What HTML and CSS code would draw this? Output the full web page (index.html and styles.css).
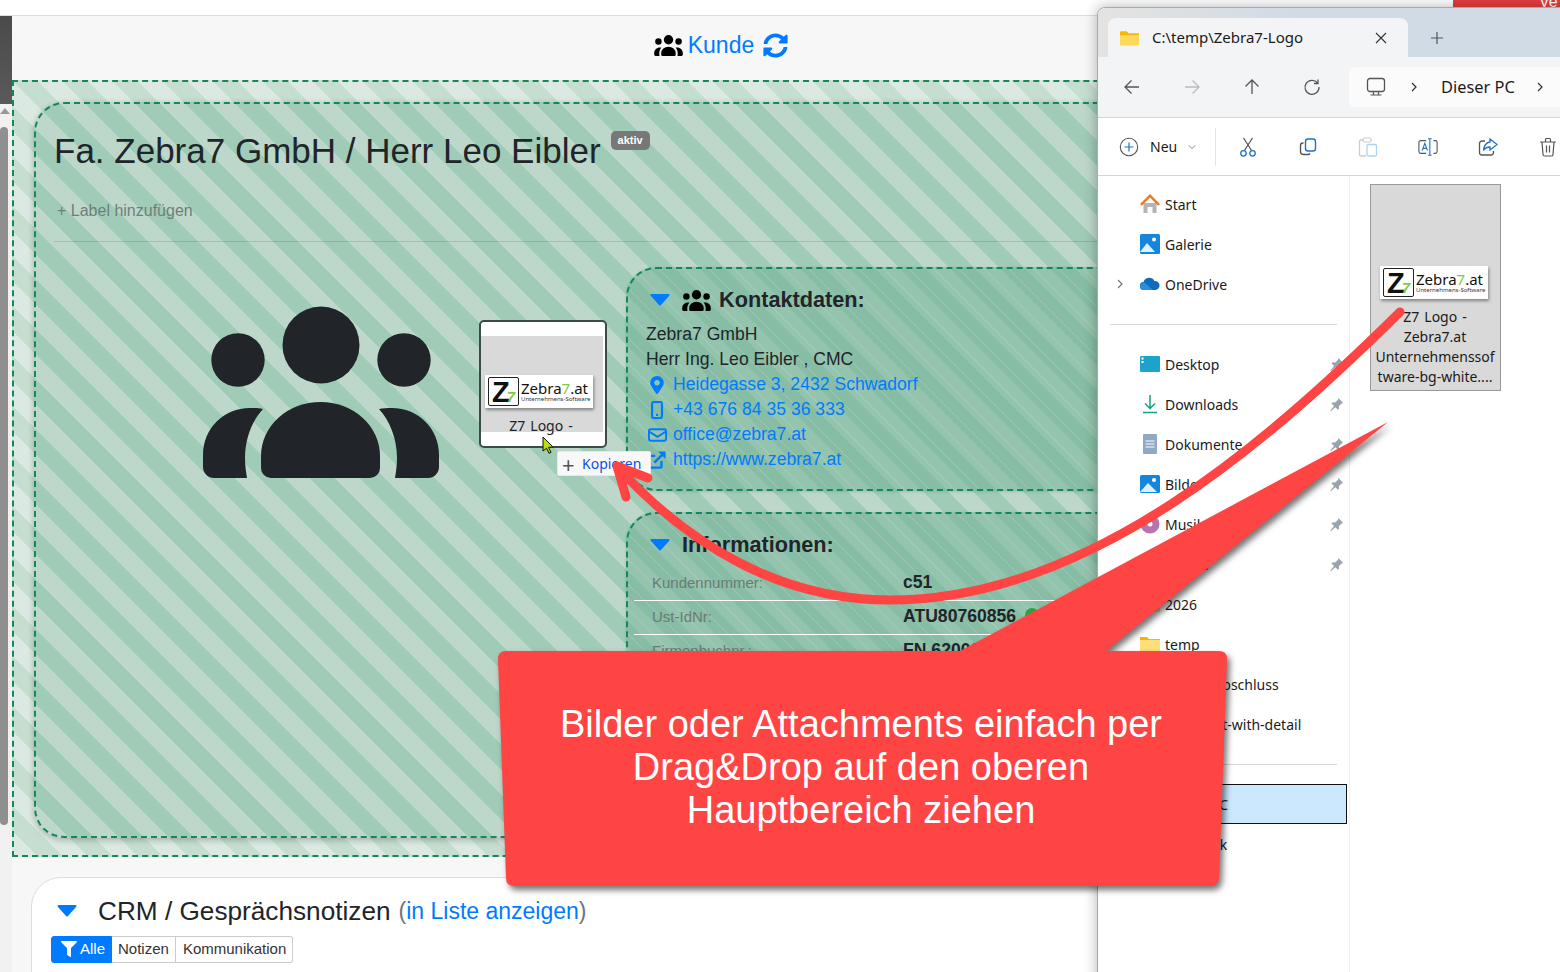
FILE: index.html
```html
<!DOCTYPE html>
<html lang="de">
<head>
    <meta charset="UTF-8">
    <title>Kunde - Fa. Zebra7 GmbH</title>
    <link rel="stylesheet" href="styles.css">
</head>
<body>

<svg class="sprite" aria-hidden="true">
    <symbol id="users" viewBox="0 0 238 173">
        <circle cx="119" cy="39" r="38.5"/>
        <circle cx="36" cy="54" r="26.7"/>
        <circle cx="202" cy="54" r="26.7"/>
        <path d="M69 172a10 10 0 0 1-10-10v-12A59.5 54 0 0 1 178 150v12a10 10 0 0 1-10 10z"/>
        <path id="users-side" d="M12 172A11 11 0 0 1 1 161v-12C1 122 22 102 48 102c5 0 9 0 13 1C50 115 43 133 43 152c0 7 1 14 2 20z"/>
        <use href="#users-side" transform="matrix(-1 0 0 1 238 0)"/>
    </symbol>
    <symbol id="caret" viewBox="0 0 20 12">
        <path d="M1.5 1h17L10 10.500z" stroke="currentColor" stroke-width="2" stroke-linejoin="round"/>
    </symbol>
    <symbol id="pin" viewBox="0 0 16 16">
        <path d="M10 1l5 5-1.500.800-3 3 .3 2.700-1.200 1.200-2.700-2.700L2 15l-.6-.6 4-4.900L2.700 6.800 3.900 5.600l2.700.3 3-3z"/>
    </symbol>
    <symbol id="chev" viewBox="0 0 10 10">
        <path d="M3 1l4 4-4 4" fill="none" stroke="currentColor" stroke-width="1.200"/>
    </symbol>
    <symbol id="folder" viewBox="0 0 20 16">
        <path d="M0 1h7l2 2h11v3H0z" fill="#f5b800"/>
        <path d="M0 4h20v12H0z" fill="#ffdf7a"/>
    </symbol>
</svg>

<div class="page">
    <div class="topbar"></div>

    <div class="app">
        <div class="strip">
            <div class="strip-dark"></div>
            <div class="strip-arrow"></div>
            <div class="strip-thumb"></div>
        </div>

        <main class="main">
            <div class="head">
                <svg class="head-users"><use href="#users"/></svg>
                <a class="head-link">Kunde</a>
                <svg class="head-sync" viewBox="0 0 512 512"><path d="M370.72 133.28C339.458 104.008 298.888 87.962 255.848 88c-77.458.068-144.328 53.178-162.791 126.85-1.344 5.363-6.122 9.15-11.651 9.15H24.103c-7.498 0-13.194-6.807-11.807-14.176C33.933 94.924 134.813 8 256 8c66.448 0 126.791 26.136 171.315 68.685L463.03 40.97C478.149 25.851 504 36.559 504 57.941V192c0 13.255-10.745 24-24 24H345.941c-21.382 0-32.09-25.851-16.971-40.971l41.75-41.749zM32 296h134.059c21.382 0 32.09 25.851 16.971 40.971l-41.75 41.75c31.262 29.273 71.835 45.319 114.876 45.28 77.418-.07 144.315-53.144 162.787-126.849 1.344-5.363 6.122-9.15 11.651-9.15h57.304c7.498 0 13.194 6.807 11.807 14.176C478.067 417.076 377.187 504 256 504c-66.448 0-126.791-26.136-171.315-68.685L48.97 471.03C33.851 486.149 8 475.441 8 454.059V320c0-13.255 10.745-24 24-24z"/></svg>
            </div>

            <section class="dropzone">
                <div class="customer">
                    <div class="title-row">
                        <h1 class="title">Fa. Zebra7 GmbH / Herr Leo Eibler</h1>
                        <span class="badge">aktiv</span>
                    </div>
                    <div class="add-label">+ Label hinzufügen</div>

                    <div class="columns">
                        <div class="avatar-col">
                            <svg class="avatar"><use href="#users"/></svg>
                        </div>
                        <div class="cards-col">
                            <div class="info-card contact-card">
                                <h3 class="card-head">
                                    <svg class="caret"><use href="#caret"/></svg>
                                    <svg class="card-users"><use href="#users"/></svg>
                                    Kontaktdaten:
                                </h3>
                                <div class="line">Zebra7 GmbH</div>
                                <div class="line">Herr Ing. Leo Eibler , CMC</div>
                                <a class="line link">
                                    <svg class="line-icon" viewBox="0 0 384 512"><path d="M172.268 501.670C26.970 291.031 0 260.211 0 192 0 85.961 85.961 0 192 0s192 85.961 192 192c0 68.211-26.970 99.031-172.268 309.670-9.535 13.774-29.930 13.773-39.464 0zM192 272c44.183 0 80-35.817 80-80s-35.817-80-80-80-80 35.817-80 80 35.817 80 80 80z"/></svg>
                                    Heidegasse 3, 2432 Schwadorf
                                </a>
                                <a class="line link">
                                    <svg class="line-icon" viewBox="0 0 16 20"><rect x="2.500" y="1" width="11" height="18" rx="2" fill="none" stroke="currentColor" stroke-width="2.400"/><circle cx="8" cy="15.500" r="1.300"/></svg>
                                    +43 676 84 35 36 333
                                </a>
                                <a class="line link">
                                    <svg class="line-icon line-icon-wide" viewBox="0 0 20 14"><rect x="1" y="1" width="18" height="12" rx="2" fill="none" stroke="currentColor" stroke-width="2"/><path d="M1.500 3.500l8.500 5.500 8.500-5.500" fill="none" stroke="currentColor" stroke-width="2"/></svg>
                                    office@zebra7.at
                                </a>
                                <a class="line link">
                                    <svg class="line-icon" viewBox="0 0 20 20"><path d="M15 11v6a1.500 1.500 0 0 1-1.500 1.500H3A1.500 1.500 0 0 1 1.500 17V7A1.500 1.500 0 0 1 3 5.500h5" fill="none" stroke="currentColor" stroke-width="2.600"/><path d="M7 13L16 4" fill="none" stroke="currentColor" stroke-width="2.800"/><path d="M11 .5h8.500V9z"/></svg>
                                    https://www.zebra7.at
                                </a>
                            </div>

                            <div class="info-card facts-card">
                                <h3 class="card-head">
                                    <svg class="caret"><use href="#caret"/></svg>
                                    <span class="facts-title">Informationen:</span>
                                </h3>
                                <div class="fact"><span class="fact-key">Kundennummer:</span><b>c51</b></div>
                                <div class="fact"><span class="fact-key">Ust-IdNr:</span><b>ATU80760856 <i class="ok"></i></b></div>
                                <div class="fact"><span class="fact-key">Firmenbuchnr.:</span><b>FN 620000</b></div>
                            </div>
                        </div>
                    </div>
                </div>
            </section>

            <section class="crm">
                <h2 class="crm-title">
                    <svg class="crm-caret"><use href="#caret"/></svg>
                    CRM / Gesprächsnotizen <small class="crm-sub">(<a>in Liste anzeigen</a>)</small>
                </h2>
                <div class="filters">
                    <button class="filter filter-active">
                        <svg class="filter-icon" viewBox="0 0 512 512"><path d="M487.976 0H24.028C2.710 0-8.047 25.866 7.058 40.971L192 225.941V432c0 7.831 3.821 15.170 10.237 19.662l80 55.980C298.020 518.690 320 507.493 320 487.980V225.941l184.947-184.970C520.021 25.896 509.338 0 487.976 0z"/></svg>Alle</button><button class="filter">Notizen</button><button class="filter">Kommunikation</button>
                </div>
            </section>
        </main>
    </div>

    <!-- what is being dragged over the page -->
    <div class="ghost">
        <div class="ghost-inner">
            <div class="logo">
                <div class="logo-z">Z<em>7</em></div>
                <div class="logo-text"><span>Zebra<em>7</em>.at</span><small>Unternehmens-Software</small></div>
            </div>
            <div class="ghost-name">Z7 Logo -</div>
        </div>
    </div>
    <svg class="cursor" viewBox="0 0 12 18"><path d="M1 1l10 10-4.500.300 2.500 5-2 1-2.500-5L1 15z" fill="#b8e000" stroke="#111" stroke-width="1"/></svg>
    <div class="copy-tip"><span class="copy-plus">+</span>Kopieren</div>

    <div class="corner-red">Ve</div>

    <!-- explorer window -->
    <div class="win">
        <div class="win-tabs">
            <div class="win-tab">
                <svg class="tab-folder" viewBox="0 0 20 16"><path d="M0 2a1 1 0 0 1 1-1h6l2 2h10a1 1 0 0 1 1 1v2H0z" fill="#f5b800"/><path d="M0 5h20v10a1 1 0 0 1-1 1H1a1 1 0 0 1-1-1z" fill="#ffd95e"/></svg>
                <span class="tab-text">C:\temp\Zebra7-Logo</span>
                <span class="tab-x">
                    <svg viewBox="0 0 12 12" width="12" height="12"><path d="M1 1l10 10M11 1L1 11" stroke="#333" stroke-width="1.100"/></svg>
                </span>
            </div>
            <svg class="tab-new" viewBox="0 0 14 14"><path d="M7 1v12M1 7h12" stroke="#555" stroke-width="1.200"/></svg>
        </div>

        <div class="win-nav">
            <button class="nav-btn"><svg viewBox="0 0 18 18"><path d="M16 9H2M8.500 2.500L2 9l6.500 6.500" fill="none" stroke="#555" stroke-width="1.300"/></svg></button>
            <button class="nav-btn"><svg viewBox="0 0 18 18"><path d="M2 9h14M9.500 2.500L16 9l-6.500 6.500" fill="none" stroke="#bbb" stroke-width="1.300"/></svg></button>
            <button class="nav-btn"><svg viewBox="0 0 18 18"><path d="M9 16V2M2.500 8.500L9 2l6.500 6.500" fill="none" stroke="#555" stroke-width="1.300"/></svg></button>
            <button class="nav-btn"><svg viewBox="0 0 18 18"><path d="M14.500 5A7 7 0 1 0 16 9" fill="none" stroke="#555" stroke-width="1.300"/><path d="M15 1.500V5.500H11" fill="none" stroke="#555" stroke-width="1.300"/></svg></button>
            <div class="address">
                <svg class="addr-pc" viewBox="0 0 20 20"><rect x="1.500" y="1.500" width="17" height="13" rx="2.500" fill="none" stroke="#555" stroke-width="1.300"/><path d="M7.500 15v2.500M12.500 15v2.500M4.500 18h11" stroke="#555" stroke-width="1.200"/></svg>
                <svg class="addr-chev"><use href="#chev"/></svg>
                <span class="addr-text">Dieser PC</span>
                <svg class="addr-chev addr-chev-last"><use href="#chev"/></svg>
            </div>
        </div>

        <div class="win-tools">
            <div class="tool-new">
                <svg viewBox="0 0 20 20" width="20" height="20"><circle cx="10" cy="10" r="8.700" fill="none" stroke="#555" stroke-width="1.100"/><path d="M10 5.500v9M5.500 10h9" stroke="#1a73c8" stroke-width="1.200"/></svg>
                <span>Neu</span>
                <svg viewBox="0 0 10 10" width="8" height="8"><path d="M1 3l4 4 4-4" fill="none" stroke="#666"/></svg>
            </div>
            <div class="tool-sep"></div>
            <div class="tool"><svg viewBox="0 0 20 22"><path d="M5 1l9 14M15 1L6 15" fill="none" stroke="#555" stroke-width="1.200"/><circle cx="5" cy="18" r="3" fill="none" stroke="#1a73c8" stroke-width="1.400"/><circle cx="15" cy="18" r="3" fill="none" stroke="#1a73c8" stroke-width="1.400"/></svg></div>
            <div class="tool"><svg viewBox="0 0 20 20"><rect x="7.500" y="2" width="10" height="12" rx="2.500" fill="none" stroke="#1a73c8" stroke-width="1.400"/><path d="M5.500 6H5A2.500 2.500 0 0 0 2.500 8.500v6A3 3 0 0 0 5.500 17.500H10a2.500 2.500 0 0 0 2-1" fill="none" stroke="#555" stroke-width="1.400"/></svg></div>
            <div class="tool"><svg viewBox="0 0 20 20"><path d="M6 3H3a1.500 1.500 0 0 0-1.500 1.500v13A1.500 1.500 0 0 0 3 19h5M14 3h-1" fill="none" stroke="#ccc" stroke-width="1.300"/><rect x="5" y="1" width="8" height="4" rx="1" fill="none" stroke="#ccc"/><rect x="9" y="7.500" width="9.500" height="11.500" rx="1.500" fill="none" stroke="#aed3f2" stroke-width="1.300"/></svg></div>
            <div class="tool"><svg viewBox="0 0 22 20"><path d="M9 3H3a2 2 0 0 0-2 2v10a2 2 0 0 0 2 2h6M17 3h2a2 2 0 0 1 2 2v10a2 2 0 0 1-2 2h-2" fill="none" stroke="#555" stroke-width="1.200"/><path d="M11 1h4M13 1v18M11 19h4M4.500 14L7.500 6 10.500 14M5.500 11.500h4" fill="none" stroke="#1a73c8" stroke-width="1.200"/></svg></div>
            <div class="tool"><svg viewBox="0 0 20 20"><path d="M7 4H4a2.500 2.500 0 0 0-2.500 2.500v9A2.500 2.500 0 0 0 4 18h9a2.500 2.500 0 0 0 2.500-2.500V14" fill="none" stroke="#555" stroke-width="1.300"/><path d="M12 2l7 5.500-7 5.500V10c-3 0-5 1-6.500 3.500C6 9 8 5.500 12 5z" fill="none" stroke="#1a73c8" stroke-width="1.300"/></svg></div>
            <div class="tool"><svg viewBox="0 0 18 20"><path d="M1 5h16M6.500 5V2.500A1 1 0 0 1 7.500 1.500h3a1 1 0 0 1 1 1V5M3 5l1 12.500A1.500 1.500 0 0 0 5.500 19h7a1.500 1.500 0 0 0 1.500-1.500L15 5M7.500 8.500v7M10.500 8.500v7" fill="none" stroke="#555" stroke-width="1.200"/></svg></div>
        </div>

        <div class="win-body">
            <nav class="tree">
                <div class="row"><svg class="row-ico" viewBox="0 0 20 20"><path d="M3.500 9h13v10h-4v-6h-5v6h-4z" fill="#b4b4b4"/><path d="M10 0L0 10l1.800 1.800L10 3.600l8.200 8.200L20 10z" fill="#e8792b"/></svg>Start</div>
                <div class="row"><svg class="row-ico" viewBox="0 0 20 20"><rect width="20" height="20" rx="1.500" fill="#1487dc"/><circle cx="14" cy="5.500" r="2" fill="#fff"/><path d="M0 18l7-9 8 9z" fill="#dff0fb"/></svg>Galerie</div>
                <div class="row"><svg class="row-exp"><use href="#chev"/></svg><svg class="row-ico" viewBox="0 0 20 14"><path d="M4 13a4 4 0 0 1-.5-8A6 6 0 0 1 14.500 4 4.500 4.500 0 0 1 15.500 13z" fill="#0f6cbd"/><path d="M0 10a4 4 0 0 1 5-4l8 7H4a4 4 0 0 1-4-3z" fill="#2a8fe0"/></svg>OneDrive</div>
                <div class="tree-sep"></div>
                <div class="row"><svg class="row-ico" viewBox="0 0 20 16"><rect width="20" height="16" rx="1" fill="#1ba3c9"/><rect x="1.500" y="1.500" width="2" height="2" fill="#fff"/><rect x="1.500" y="5" width="2" height="2" fill="#fff"/></svg>Desktop<svg class="row-pin"><use href="#pin"/></svg></div>
                <div class="row"><svg class="row-ico" viewBox="0 0 20 20"><path d="M10 1v13M5 9.500l5 5 5-5" fill="none" stroke="#12a37c" stroke-width="1.500"/><path d="M3 18.500h14" stroke="#12a37c" stroke-width="1.500"/></svg>Downloads<svg class="row-pin"><use href="#pin"/></svg></div>
                <div class="row"><svg class="row-ico" viewBox="0 0 20 20"><rect x="3" width="14" height="20" rx="1" fill="#8fa8c6"/><path d="M5.500 7h9M5.500 10h9M5.500 13h9" stroke="#fff"/></svg>Dokumente<svg class="row-pin"><use href="#pin"/></svg></div>
                <div class="row"><svg class="row-ico" viewBox="0 0 20 20"><rect y="1" width="20" height="18" rx="1.500" fill="#1487dc"/><circle cx="14" cy="6" r="2" fill="#fff"/><path d="M0 18l8-9 9 9z" fill="#dff0fb"/></svg>Bilder<svg class="row-pin"><use href="#pin"/></svg></div>
                <div class="row"><svg class="row-ico" viewBox="0 0 20 20"><circle cx="10" cy="10" r="9.500" fill="#b673b0"/><circle cx="10" cy="10" r="2.500" fill="#fff"/></svg>Musik<svg class="row-pin"><use href="#pin"/></svg></div>
                <div class="row"><svg class="row-ico" viewBox="0 0 20 20"><rect y="2" width="20" height="16" rx="1.500" fill="#7a5cc0"/></svg>Videos<svg class="row-pin"><use href="#pin"/></svg></div>
                <div class="row"><svg class="row-ico"><use href="#folder"/></svg>2026</div>
                <div class="row"><svg class="row-ico"><use href="#folder"/></svg>temp</div>
                <div class="row"><svg class="row-ico"><use href="#folder"/></svg>Monatsabschluss</div>
                <div class="row"><svg class="row-ico"><use href="#folder"/></svg>shipment-with-detail</div>
                <div class="tree-sep"></div>
                <div class="row row-selected"><svg class="row-ico" viewBox="0 0 20 20"><rect x="1" y="2" width="18" height="13" rx="2" fill="#1487dc"/></svg>Dieser PC</div>
                <div class="row"><svg class="row-ico" viewBox="0 0 20 20"><rect x="1" y="2" width="18" height="13" rx="2" fill="#7a8ea8"/></svg>Netzwerk</div>
            </nav>
            <div class="files">
                <div class="file">
                    <div class="logo">
                        <div class="logo-z">Z<em>7</em></div>
                        <div class="logo-text"><span>Zebra<em>7</em>.at</span><small>Unternehmens-Software</small></div>
                    </div>
                    <div class="file-name">Z7 Logo -<br>Zebra7.at<br>Unternehmenssof<br>tware-bg-white....</div>
                </div>
            </div>
        </div>
    </div>

    <!-- annotation drawn on top of the screenshot -->
    <svg class="note-art" viewBox="0 0 1560 972">
        <g class="arrow">
            <path d="M1400 312C1270 440 1090 600 890 600C780 600 690 545 620 470"/>
            <path d="M648 478L617 466L626 497"/>
        </g>
        <path class="bubble" d="M506 651H960L1388 422L1106 651H1219Q1227 651 1227 659L1219 878Q1218 886 1210 886H514Q506 886 506 878L498 659Q498 651 506 651Z"/>
    </svg>
    <div class="note-text">Bilder oder Attachments einfach per Drag&amp;Drop auf den oberen Hauptbereich ziehen</div>
</div>

</body>
</html>
```

FILE: styles.css
```css
* {
    box-sizing: border-box;
}
body {
    margin: 0;
    font-family: "Liberation Sans", Arial, sans-serif;
    color: #212529;
    background: #fff;
}
a {
    color: #007bff;
}
.sprite {
    position: absolute;
    width: 0;
    height: 0;
}
.page {
    position: relative;
    width: 1560px;
    height: 972px;
    overflow: hidden;
}

/* top of the page */
.topbar {
    height: 16px;
    background: #fff;
    border-bottom: 1px solid #ddd;
}
.app {
    display: flex;
    height: 956px;
}
.strip {
    position: relative;
    flex: 0 0 12px;
    background: #f1f1f1;
}
.strip-dark {
    height: 88px;
    background: linear-gradient(#4a4a4a, #5a5a5a);
}
.strip-arrow {
    width: 0;
    margin: 4px 0 6px 0;
    border-left: 5px solid transparent;
    border-right: 5px solid transparent;
    border-bottom: 6px solid #999;
}
.strip-thumb {
    width: 8px;
    height: 698px;
    margin-top: 13px;
    background: #8f8f8f;
    border-radius: 4px;
}
.main {
    flex: 1;
    min-width: 0;
    background: #f7f7f7;
}
.head {
    display: flex;
    align-items: center;
    justify-content: center;
    gap: 5px;
    height: 64px;
    padding: 0 130px 5px 0;
    font-size: 23px;
}
.head-users {
    width: 29px;
    height: 21px;
}
.head-link {
    margin-right: 4px;
}
.head-sync {
    width: 25px;
    height: 25px;
    fill: #007bff;
}

/* striped drop area */
.dropzone {
    height: 777px;
    padding: 20px;
    border: 2px dashed #14885a;
    border-right: 0;
    background: repeating-linear-gradient(45deg, #dbe9e2 20.3px 37.98px, #c6decf 37.98px 55.66px) fixed;
}
.customer {
    height: 736px;
    padding: 21px 18px;
    border: 2px dashed #14885a;
    border-radius: 30px;
    box-shadow: 0 2px 6px rgba(0, 0, 0, 0.25);
    background: repeating-linear-gradient(45deg, #bdd8cb 20.3px 37.98px, #9fcbb7 37.98px 55.66px) fixed;
}
.title-row {
    display: flex;
    align-items: flex-start;
    gap: 10px;
}
.title {
    margin: 4px 0 0;
    font-size: 35px;
    line-height: 43px;
    font-weight: 400;
}
.badge {
    margin-top: 6px;
    padding: 2px 7px;
    height: 19px;
    font-size: 11px;
    font-weight: 700;
    line-height: 15px;
    color: #fff;
    background: #787878;
    border-radius: 5px;
}
.add-label {
    margin-top: 30px;
    padding: 0 3px 21px;
    font-size: 16px;
    line-height: 18px;
    color: #6f7f78;
    border-bottom: 1px solid rgba(0, 0, 0, 0.12);
}
.columns {
    display: flex;
    margin-top: 25px;
}
.avatar-col {
    flex: 0 0 572px;
    padding: 39px 0 0 148px;
}
.avatar {
    display: block;
    width: 238px;
    height: 173px;
    fill: #212529;
}
.cards-col {
    flex: 1;
    display: flex;
    flex-direction: column;
    gap: 21px;
}
.info-card {
    border: 2px dashed #14885a;
    border-right: 0;
    border-radius: 30px 0 0 30px;
    padding: 16px 18px;
    background: repeating-linear-gradient(45deg, rgba(255, 255, 255, 0.18) 0 1px, transparent 1px 17.68px), rgba(110, 175, 145, 0.5);
    box-shadow: 0 1px 3px rgba(0, 0, 0, 0.12);
}
.contact-card {
    height: 224px;
}
.facts-card {
    height: 300px;
}
.card-head {
    display: flex;
    align-items: center;
    margin: 0 0 7px;
    height: 30px;
    font-size: 21.700px;
    font-weight: 700;
}
.caret {
    width: 20px;
    height: 12px;
    margin: 0 12px 0 4px;
    color: #007bff;
    fill: #007bff;
}
.card-users {
    width: 29px;
    height: 21px;
    margin-right: 8px;
}
.line {
    display: flex;
    align-items: center;
    height: 25px;
    font-size: 17.600px;
}
.link {
    color: #007bff;
}
.line-icon {
    flex: 0 0 18px;
    height: 18px;
    margin: 0 7px 0 2px;
    fill: currentColor;
}
.line-icon-wide {
    flex-basis: 19px;
    height: 14px;
    margin: 0 6px 0 2px;
}
.fact {
    display: flex;
    align-items: center;
    height: 34px;
    margin-left: -12px;
    padding: 0 0 3px 18px;
    border-bottom: 1px solid #fff;
    font-size: 17.600px;
}
.fact-key {
    flex: 0 0 251px;
    font-size: 15px;
    color: #6c7a74;
}
.ok {
    display: inline-block;
    width: 14px;
    height: 14px;
    margin-left: 4px;
    background: #28a745;
    border-radius: 50%;
}

/* crm card below */
.crm {
    width: 1300px;
    height: 120px;
    margin: 20px 0 0 19px;
    padding: 16px 19px;
    background: #fff;
    border: 1px solid #ddd;
    border-radius: 30px 0 0 0;
}
.crm-title {
    display: flex;
    align-items: center;
    gap: 8px;
    margin: 0;
    height: 34px;
    font-size: 26.200px;
    font-weight: 400;
}
.crm-caret {
    flex: 0 0 20px;
    height: 12px;
    margin: 0 13px 0 6px;
    color: #007bff;
    fill: #007bff;
}
.crm-sub {
    font-size: 23px;
    color: #6c757d;
}
.filters {
    display: flex;
    margin-top: 8px;
}
.filter {
    height: 27px;
    padding: 0 6px 2px;
    font: 15px "Liberation Sans", Arial, sans-serif;
    color: #333;
    background: #fff;
    border: 1px solid #ccc;
    border-left: 0;
}
.filter:last-child {
    padding-left: 7px;
    border-radius: 0 3px 3px 0;
}
.filter-active {
    display: flex;
    align-items: center;
    gap: 3px;
    padding: 0 6px 2px 9px;
    color: #fff;
    background: #007bff;
    border: 1px solid #007bff;
    border-radius: 3px 0 0 3px;
}
.filter-icon {
    width: 16px;
    height: 16px;
    fill: #fff;
}

/* drag ghost */
.ghost {
    position: absolute;
    left: 479px;
    top: 320px;
    width: 128px;
    height: 128px;
    padding-top: 14px;
    background: #fff;
    border: 2px solid #3f4a46;
    border-radius: 5px;
}
.ghost-inner {
    height: 96px;
    margin-right: 2px;
    padding: 39px 0 0 4px;
    background: #d9d9d9;
}
.ghost-name {
    margin-top: 8px;
    padding-right: 6px;
    text-align: center;
    word-spacing: 1.500px;
    font: 14px/20px "Noto Sans", sans-serif;
}
.logo {
    display: flex;
    align-items: center;
    width: 108px;
    height: 33px;
    padding: 2px 3px;
    background: #fff;
    box-shadow: 1px 2px 3px rgba(0, 0, 0, 0.4);
}
.logo-z {
    flex: 0 0 31px;
    height: 29px;
    font: 700 29px/28px "Liberation Sans", sans-serif;
    letter-spacing: -3px;
    color: #111;
    text-align: left;
    padding-left: 3px;
    border: 1px solid #222;
    border-radius: 2px;
}
.logo-z em {
    font: italic 700 15px/14px "Liberation Sans", sans-serif;
    color: #7ccb3c;
}
.logo-text {
    display: flex;
    flex-direction: column;
    margin-left: 2px;
    font: 15px/16px "Noto Sans", sans-serif;
    color: #111;
    white-space: nowrap;
}
.logo-text em {
    font-style: normal;
    color: #7ccb3c;
}
.logo-text small {
    font-size: 6px;
    line-height: 7px;
    color: #333;
}
.cursor {
    position: absolute;
    left: 542px;
    top: 436px;
    width: 12px;
    height: 18px;
}
.copy-tip {
    position: absolute;
    left: 557px;
    top: 451px;
    display: flex;
    align-items: center;
    width: 94px;
    height: 25px;
    padding-left: 4px;
    font: 14px "Noto Sans", sans-serif;
    color: #0a50e6;
    background: #f8f8f8;
    border: 1px solid #e8e8e8;
    border-radius: 2px;
}
.copy-plus {
    width: 20px;
    font-size: 22px;
    line-height: 20px;
    color: #555;
}
.corner-red {
    position: absolute;
    left: 1453px;
    top: 0;
    width: 107px;
    height: 7px;
    padding-left: 86px;
    overflow: hidden;
    font-size: 16px;
    line-height: 4px;
    color: #fff;
    background: #e53e3e;
}

/* explorer window */
.win {
    position: absolute;
    left: 1097px;
    top: 7px;
    width: 500px;
    height: 980px;
    background: #fff;
    border: 1px solid #aaa;
    border-radius: 8px 0 0 0;
    box-shadow: 0 0 14px rgba(0, 0, 0, 0.3);
    font: 14px "Noto Sans", sans-serif;
    color: #1a1a1a;
}
.win-tabs {
    display: flex;
    align-items: center;
    height: 49px;
    padding: 10px 0 0 10px;
    background: linear-gradient(90deg, #e4e3e1, #d0dbe6 40%);
    border-radius: 8px 0 0 0;
}
.win-tab {
    display: flex;
    align-items: center;
    align-self: stretch;
    width: 300px;
    padding: 0 12px;
    background: #f3f4f6;
    border-radius: 8px 8px 0 0;
}
.tab-folder {
    flex: 0 0 19px;
    height: 16px;
}
.tab-text {
    margin: 0 0 2px 13px;
    font-size: 15px;
}
.tab-x {
    margin-left: auto;
    margin-right: 9px;
    line-height: 0;
}
.tab-new {
    width: 14px;
    height: 14px;
    margin-left: 22px;
}
.win-nav {
    display: flex;
    align-items: center;
    height: 61px;
    padding-left: 4px;
    background: #f3f4f6;
    border-bottom: 1px solid #d5d5d5;
}
.nav-btn {
    flex: 0 0 60px;
    height: 40px;
    padding: 0;
    background: none;
    border: 0;
    line-height: 0;
}
.nav-btn svg {
    width: 18px;
    height: 18px;
}
.address {
    display: flex;
    align-items: center;
    flex: 0 0 300px;
    height: 40px;
    margin-left: 7px;
    padding-left: 17px;
    background: #fbfbfc;
    border-radius: 6px;
    font-size: 16.400px;
}
.addr-pc {
    width: 20px;
    height: 20px;
}
.addr-chev {
    width: 10px;
    height: 10px;
    margin: 0 22px 0 23px;
    color: #333;
}
.addr-chev-last {
    margin-left: 20px;
}
.addr-text {
    padding-bottom: 2px;
}
.win-tools {
    display: flex;
    align-items: center;
    height: 58px;
    padding-left: 21px;
    border-bottom: 1px solid #d5d5d5;
}
.tool-new {
    display: flex;
    align-items: center;
    gap: 11px;
    width: 91px;
}
.tool-sep {
    width: 1px;
    height: 38px;
    margin: 0 2px 0 5px;
    background: #e5e5e5;
}
.tool {
    flex: 0 0 60px;
    text-align: center;
    line-height: 0;
}
.tool svg {
    width: 20px;
    height: 20px;
}
.win-body {
    display: flex;
}
.tree {
    flex: 0 0 252px;
    height: 800px;
    padding: 8px 2px 0 12px;
    border-right: 1px solid #f0f0f0;
}
.row {
    position: relative;
    display: flex;
    align-items: center;
    height: 40px;
    padding-left: 30px;
}
.row-ico {
    flex: 0 0 20px;
    height: 20px;
    margin-right: 5px;
}
.row-exp {
    position: absolute;
    left: 5px;
    width: 10px;
    height: 10px;
    color: #777;
}
.row-pin {
    position: absolute;
    right: 3px;
    width: 15px;
    height: 15px;
    fill: #9aa4ad;
}
.tree-sep {
    height: 1px;
    margin: 20px 10px 19px 0;
    background: #d8d8d8;
}
.row-selected {
    background: #cce8ff;
    border: 1px solid #111;
    padding-left: 29px;
}
.files {
    padding: 8px 0 0 20px;
}
.file {
    width: 131px;
    height: 207px;
    padding: 81px 9px 0;
    background: #d9d9d9;
    border: 1px solid #999;
}
.file-name {
    width: 130px;
    margin: 8px 0 0 -10px;
    text-align: center;
    word-spacing: 1.500px;
    white-space: nowrap;
    line-height: 20px;
}

/* red annotation */
.note-art {
    position: absolute;
    left: 0;
    top: 0;
    width: 1560px;
    height: 972px;
    pointer-events: none;
}
.arrow path {
    fill: none;
    stroke: #ff4444;
    stroke-width: 9;
    stroke-linecap: round;
    stroke-linejoin: round;
}
.bubble {
    fill: #ff4444;
    filter: drop-shadow(3px 4px 3px rgba(0, 0, 0, 0.55));
}
.note-text {
    position: absolute;
    left: 531px;
    top: 703px;
    width: 660px;
    text-align: center;
    font-size: 38px;
    line-height: 43px;
    color: #fff;
}
```
